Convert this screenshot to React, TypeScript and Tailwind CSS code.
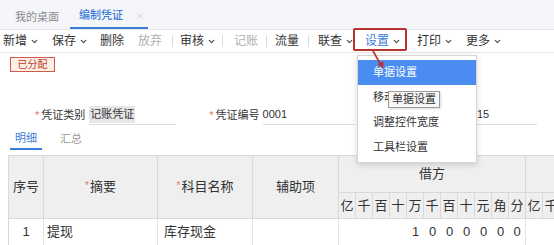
import { ChevronDown, X } from "lucide-react";

const font = "font-['Liberation_Sans','Noto_Sans_CJK_SC',sans-serif]";

const Caret = () => (
  <ChevronDown size={9} strokeWidth={3.5} className="ml-[3px] text-[#555]" />
);

const Sep = ({ w }: { w: string }) => (
  <div className={`${w} flex items-center`}>
    <div className="w-px h-[12px] bg-[#dcdcdc]" />
  </div>
);

const digitsHead = ["亿", "千", "百", "十", "万", "千", "百", "十", "元", "角", "分"];
const amount = ["", "", "", "", "1", "0", "0", "0", "0", "0", "0"];

export default function App() {
  return (
    <div className={`relative w-[554px] h-[245px] overflow-hidden bg-white text-[#333] ${font}`}>
      {/* tabs */}
      <div className="h-[29px] bg-[#f4f6f9] flex items-stretch text-[11px]">
        <div className="ml-[15px] w-[55px] flex items-center pt-[5px] text-[#8c8c8c]">我的桌面</div>
        <div className="w-[78px] flex items-center pt-[4px] pl-[9px] border-b-2 border-[#3c7bd6] text-[#3c7bd6] font-medium">
          编制凭证
          <X size={10} strokeWidth={1.5} className="ml-[12px] text-[#bbb]" />
        </div>
      </div>

      {/* toolbar */}
      <div className="h-[24px] border-t border-b border-[#e6e6e6] flex items-center text-[12px] text-[#333]">
        <div className="ml-[3px] w-[49px] flex items-center">新增<Caret /></div>
        <div className="w-[48px] flex items-center">保存<Caret /></div>
        <div className="w-[38px] flex items-center">删除</div>
        <div className="w-[34px] flex items-center text-[#b0b0b0]">放弃</div>
        <Sep w="w-[8px]" />
        <div className="w-[42px] flex items-center">审核<Caret /></div>
        <Sep w="w-[12px]" />
        <div className="w-[32px] flex items-center text-[#b0b0b0]">记账</div>
        <Sep w="w-[9px]" />
        <div className="w-[33px] flex items-center">流量</div>
        <Sep w="w-[10px]" />
        <div className="w-[47px] flex items-center">联查<Caret /></div>
        <div className="w-[52px] flex items-center text-[#3c7bd6]">设置<Caret /></div>
        <div className="w-[49px] flex items-center">打印<Caret /></div>
        <div className="flex items-center">更多<Caret /></div>
      </div>

      {/* status badge */}
      <div className="flex pt-[4px] pl-[10px]">
        <span className="flex items-center justify-center w-[45px] h-[15px] border border-[#cf5a4a] bg-[#fcefe4] text-[#c0392b] text-[10px] leading-none">
          已分配
        </span>
      </div>

      {/* header form */}
      <div className="mt-[33px] h-[20px] flex items-center text-[11px]">
        <div className="ml-[35px] flex items-center">
          <span className="text-[#e07070] mr-[2px]">*</span>凭证类别
        </div>
        <div className="ml-[4px] w-[87px] h-[20px] flex items-center border-b border-[#ddd]">
          <span className="bg-[#e6e6e6] px-[1px]">记账凭证</span>
        </div>
        <div className="ml-[33px] flex items-center">
          <span className="text-[#e07070] mr-[2px]">*</span>凭证编号
        </div>
        <div className="ml-[3px] w-[92px] h-[20px] flex items-center border-b border-[#ddd]">0001</div>
        <div className="ml-[24px] flex items-center">
          <span className="text-[#e07070] mr-[2px]">*</span>制单日期
        </div>
        <div className="ml-[4px] w-[104px] h-[20px] flex items-center border-b border-[#ddd]">2020-01-15</div>
      </div>

      {/* sub tabs */}
      <div className="mt-[4px] h-[21px] flex items-stretch text-[11px]">
        <div className="ml-[10px] w-[32px] flex items-center justify-center border-b-2 border-[#3c7bd6] text-[#3c7bd6]">明细</div>
        <div className="ml-[18px] flex items-center text-[#999]">汇总</div>
      </div>

      {/* table */}
      <div className="mt-[5px] ml-[8px] grid grid-cols-[35px_114px_95px_86px_repeat(13,17px)] grid-rows-[37px_26px_27px] border-l border-t border-[#d9d9d9] text-[13px] text-[#333]">
        <div className="row-span-2 bg-[#efefef] border-r border-b border-[#d9d9d9] flex items-center justify-center">序号</div>
        <div className="row-span-2 bg-[#efefef] border-r border-b border-[#d9d9d9] flex items-center justify-center">
          <span className="text-[#e57373] text-[10px] mr-[1px] -mt-[4px]">*</span>摘要
        </div>
        <div className="row-span-2 bg-[#efefef] border-r border-b border-[#d9d9d9] flex items-center justify-center">
          <span className="text-[#e57373] text-[10px] mr-[1px] -mt-[4px]">*</span>科目名称
        </div>
        <div className="row-span-2 bg-[#efefef] border-r border-b border-[#d9d9d9] flex items-center justify-center">辅助项</div>
        <div className="col-span-11 bg-[#efefef] border-r border-b border-[#d9d9d9] flex items-center justify-center">借方</div>
        <div className="col-span-2 bg-[#efefef] border-b border-[#d9d9d9]" />
        {digitsHead.map((d, i) => (
          <div key={i} className="bg-[#efefef] border-r border-b border-[#d9d9d9] flex items-center justify-center">{d}</div>
        ))}
        <div className="bg-[#efefef] border-r border-b border-[#d9d9d9] flex items-center justify-center">亿</div>
        <div className="bg-[#efefef] border-r border-b border-[#d9d9d9] flex items-center justify-center">千</div>

        <div className="border-r border-b border-[#e3e3e3] flex items-center justify-center">1</div>
        <div className="border-r border-b border-[#e3e3e3] flex items-center pl-[3px]">提现</div>
        <div className="border-r border-b border-[#e3e3e3] flex items-center pl-[6px]">库存现金</div>
        <div className="border-r border-b border-[#e3e3e3]" />
        {amount.map((d, i) => (
          <div key={i} className={`flex items-center justify-center border-b border-[#e3e3e3] ${i === 10 ? "border-r" : ""}`}>{d}</div>
        ))}
        <div className="border-b border-[#e3e3e3]" />
        <div className="border-b border-[#e3e3e3]" />
      </div>

      {/* highlight annotation on 设置 */}
      <div className="absolute left-[353px] top-[28px] w-[54px] h-[23px] border-2 border-[#b8322e] rounded-[2px]" />

      {/* dropdown menu */}
      <div className="absolute left-[357px] top-[55px] w-[120px] h-[108px] bg-white border border-[#d6d6d6] shadow-[0_2px_6px_rgba(0,0,0,0.15)] pt-[4px] text-[11px] text-[#333]">
        <div className="h-[25px] flex items-center pl-[15px] bg-[#4a8cf0] text-white">单据设置</div>
        <div className="h-[25px] flex items-center pl-[15px]">移动按钮</div>
        <div className="h-[25px] flex items-center pl-[15px]">调整控件宽度</div>
        <div className="h-[25px] flex items-center pl-[15px]">工具栏设置</div>
      </div>

      {/* tooltip */}
      <div className="absolute left-[388px] top-[91px] h-[17px] px-[3px] flex items-center bg-[#f7f7f7] border border-[#9a9a9a] text-[11px] text-[#333] shadow-[1px_1px_2px_rgba(0,0,0,0.15)]">
        单据设置
      </div>

      {/* red arrow */}
      <svg className="absolute left-[368px] top-[49px]" width="20" height="22" viewBox="0 0 20 22">
        <line x1="5" y1="2" x2="13" y2="16" stroke="#c0302b" strokeWidth="1.6" />
        <polygon points="15,20 9.5,15 15.5,12.5" fill="#c0302b" />
      </svg>
    </div>
  );
}
